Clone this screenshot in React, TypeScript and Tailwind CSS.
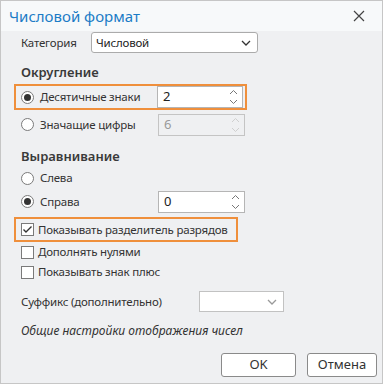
import React from 'react';

const font = { fontFamily: '"Noto Sans", "Open Sans", sans-serif' };

const Radio = ({ checked }: { checked?: boolean }) => (
  <span className="w-[13px] h-[13px] rounded-full border border-[#7a7a7a] bg-white flex items-center justify-center shrink-0">
    {checked && <span className="w-[7px] h-[7px] rounded-full bg-[#333]" />}
  </span>
);

const Check = ({ checked }: { checked?: boolean }) => (
  <span className="w-[13px] h-[13px] border border-[#7a7a7a] bg-white flex items-center justify-center shrink-0">
    {checked && (
      <svg width="11" height="11" viewBox="0 0 11 11">
        <path d="M1.5 5.5 L4 8 L9.5 2.5" fill="none" stroke="#333" strokeWidth="1.4" />
      </svg>
    )}
  </span>
);

const Spin = ({ value, disabled, w }: { value: string; disabled?: boolean; w: string }) => (
  <div
    className={`${w} h-[22px] flex items-center justify-between border pl-[5px] pr-[4px] ${
      disabled ? 'border-[#c4c4c4] bg-[#eff0f2] text-[#9a9a9a]' : 'border-[#b5b5b5] bg-white text-[#222]'
    }`}
  >
    <span className="text-[13px]">{value}</span>
    <svg width="9" height="16" viewBox="0 0 9 16">
      <path d="M1 5 L4.5 1.5 L8 5" fill="none" stroke={disabled ? '#cfcfcf' : '#777'} strokeWidth="1" />
      <path d="M1 11 L4.5 14.5 L8 11" fill="none" stroke={disabled ? '#cfcfcf' : '#777'} strokeWidth="1" />
    </svg>
  </div>
);

const Chevron = ({ color }: { color: string }) => (
  <svg width="10" height="6" viewBox="0 0 10 6">
    <path d="M1 1 L5 5 L9 1" fill="none" stroke={color} strokeWidth="1.3" />
  </svg>
);

export default function App() {
  return (
    <div style={font} className="w-[383px] h-[384px] border border-[#c6c6c6] bg-[#eff0f2] flex flex-col text-[11.5px] tracking-[-0.2px] whitespace-nowrap text-[#333]">
      <div className="h-[30px] bg-[#f7f9fa] flex items-center justify-between pl-[8px] pr-[17px] shrink-0">
        <span className="text-[15px] tracking-normal text-[#1b7cc6]">Числовой формат</span>
        <svg width="12" height="12" viewBox="0 0 12 12">
          <path d="M1 1 L11 11 M11 1 L1 11" stroke="#444" strokeWidth="1.2" />
        </svg>
      </div>

      <div className="flex flex-col pl-[13px]">
        <div className="mt-[1px] h-[21px] flex items-center pl-[7px]">
          <span className="w-[70px]">Категория</span>
          <div className="w-[167px] h-[21px] bg-white border border-[#ababab] rounded-[3px] flex items-center justify-between pl-[4px] pr-[6px] text-[#222]">
            <span>Числовой</span>
            <Chevron color="#333" />
          </div>
        </div>

        <div className="mt-[10px] h-[20px] flex items-center pl-[7px] text-[13px] tracking-normal font-semibold text-[#3a3a3a]">Округление</div>

        <div className="mt-[1px] w-[233px] h-[26px] border-2 border-[#ef8f3c] flex items-center pl-[5px] pr-[2px]">
          <Radio checked />
          <span className="ml-[6px] flex-1">Десятичные знаки</span>
          <Spin value="2" w="w-[86px]" />
        </div>

        <div className="mt-[3px] w-[233px] h-[23px] flex items-center pl-[7px] pr-[2px]">
          <Radio />
          <span className="ml-[6px] flex-1">Значащие цифры</span>
          <Spin value="6" disabled w="w-[87px]" />
        </div>

        <div className="mt-[11px] h-[20px] flex items-center pl-[7px] text-[13px] tracking-normal font-semibold text-[#3a3a3a]">Выравнивание</div>

        <div className="mt-[1px] h-[20px] flex items-center pl-[7px]">
          <Radio />
          <span className="ml-[6px]">Слева</span>
        </div>

        <div className="mt-[2px] w-[233px] h-[23px] flex items-center pl-[7px] pr-[2px]">
          <Radio checked />
          <span className="ml-[6px] flex-1">Справа</span>
          <Spin value="0" w="w-[87px]" />
        </div>

        <div className="mt-[4px] w-[224px] h-[25px] border-2 border-[#ef8f3c] flex items-center pl-[5px]">
          <Check checked />
          <span className="ml-[4px]">Показывать разделитель разрядов</span>
        </div>

        <div className="h-[20px] flex items-center pl-[7px]">
          <Check />
          <span className="ml-[4px]">Дополнять нулями</span>
        </div>

        <div className="h-[20px] flex items-center pl-[7px]">
          <Check />
          <span className="ml-[4px]">Показывать знак плюс</span>
        </div>

        <div className="mt-[9px] h-[21px] flex items-center pl-[7px]">
          <span className="w-[178px]">Суффикс (дополнительно)</span>
          <div className="w-[85px] h-[21px] bg-white border border-[#c2c2c2] flex items-center justify-end pr-[6px]">
            <Chevron color="#999" />
          </div>
        </div>

        <div className="mt-[9px] h-[20px] flex items-center pl-[7px] italic text-[12px] tracking-normal">Общие настройки отображения чисел</div>

        <div className="mt-[12px] h-[24px] flex justify-end gap-[11px] pr-[5px] text-[13px] tracking-normal">
          <button className="w-[75px] h-[24px] bg-white border border-[#8a8a8a] rounded-[3px] text-[#333]">OK</button>
          <button className="w-[70px] h-[24px] bg-white border border-[#8a8a8a] rounded-[3px] text-[#333]">Отмена</button>
        </div>
      </div>
    </div>
  );
}
